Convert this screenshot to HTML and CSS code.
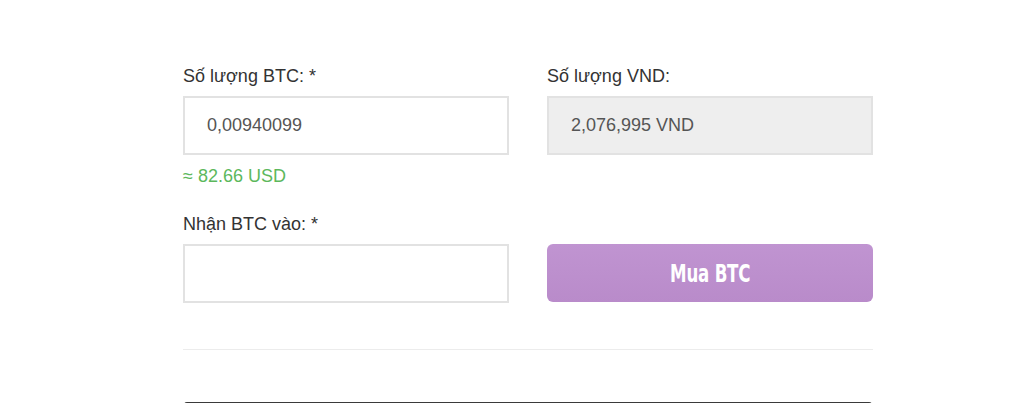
FILE: index.html
```html
<!DOCTYPE html>
<html lang="vi">
<head>
<meta charset="utf-8">
<link rel="stylesheet" href="styles.css">
</head>
<body>
<div class="page">
  <form class="form">
    <div class="grid">
      <div class="field">
        <label class="label">Số lượng BTC: *</label>
        <div class="input">0,00940099</div>
        <div class="hint">≈ 82.66 USD</div>
      </div>
      <div class="field">
        <label class="label">Số lượng VND:</label>
        <div class="input readonly">2,076,995 VND</div>
      </div>
      <div class="field">
        <label class="label">Nhận BTC vào: *</label>
        <div class="input"></div>
      </div>
      <div class="field bottom">
        <button type="button" class="btn"><span class="btn-text">Mua BTC</span></button>
      </div>
    </div>
    <div class="divider"></div>
    <div class="dark"></div>
  </form>
</div>
</body>
</html>
```

FILE: styles.css
```css
html, body {
  margin: 0;
  padding: 0;
  background: #fff;
  height: 403px;
  overflow: hidden;
}
.page {
  width: 690px;
  margin-left: 183px;
  padding-top: 64px;
  font-family: "Liberation Sans", Arial, sans-serif;
}
.grid {
  display: grid;
  grid-template-columns: 326px 326px;
  column-gap: 38px;
  row-gap: 25px;
}
.field {
  display: flex;
  flex-direction: column;
}
.field.bottom {
  justify-content: flex-end;
}
.label {
  font-size: 18px;
  line-height: 24px;
  color: #333;
  margin-bottom: 8px;
}
.input {
  box-sizing: border-box;
  height: 59px;
  border: 2px solid #e2e2e2;
  background: #fff;
  padding: 0 22px;
  display: flex;
  align-items: center;
  font-size: 18px;
  color: #555;
}
.input.readonly {
  background: #eeeeee;
}
.hint {
  margin-top: 10px;
  font-size: 18px;
  line-height: 22px;
  color: #5cb85c;
}
.btn {
  height: 58px;
  margin-bottom: 1px;
  border: 0;
  border-radius: 6px;
  background: linear-gradient(#c094d1, #b98bca);
  color: #fff;
  cursor: pointer;
  padding: 0;
}
.btn-text {
  display: inline-block;
  font-family: "DejaVu Sans Condensed", "DejaVu Sans", sans-serif;
  font-weight: bold;
  font-size: 25px;
  letter-spacing: -0.3px;
  transform: scaleX(0.74);
}
.divider {
  margin-top: 46px;
  height: 1px;
  background: #ececec;
}
.dark {
  margin: 52px 1px 0;
  height: 10px;
  background: #3a3a3a;
  border-radius: 3px 3px 0 0;
}
```
